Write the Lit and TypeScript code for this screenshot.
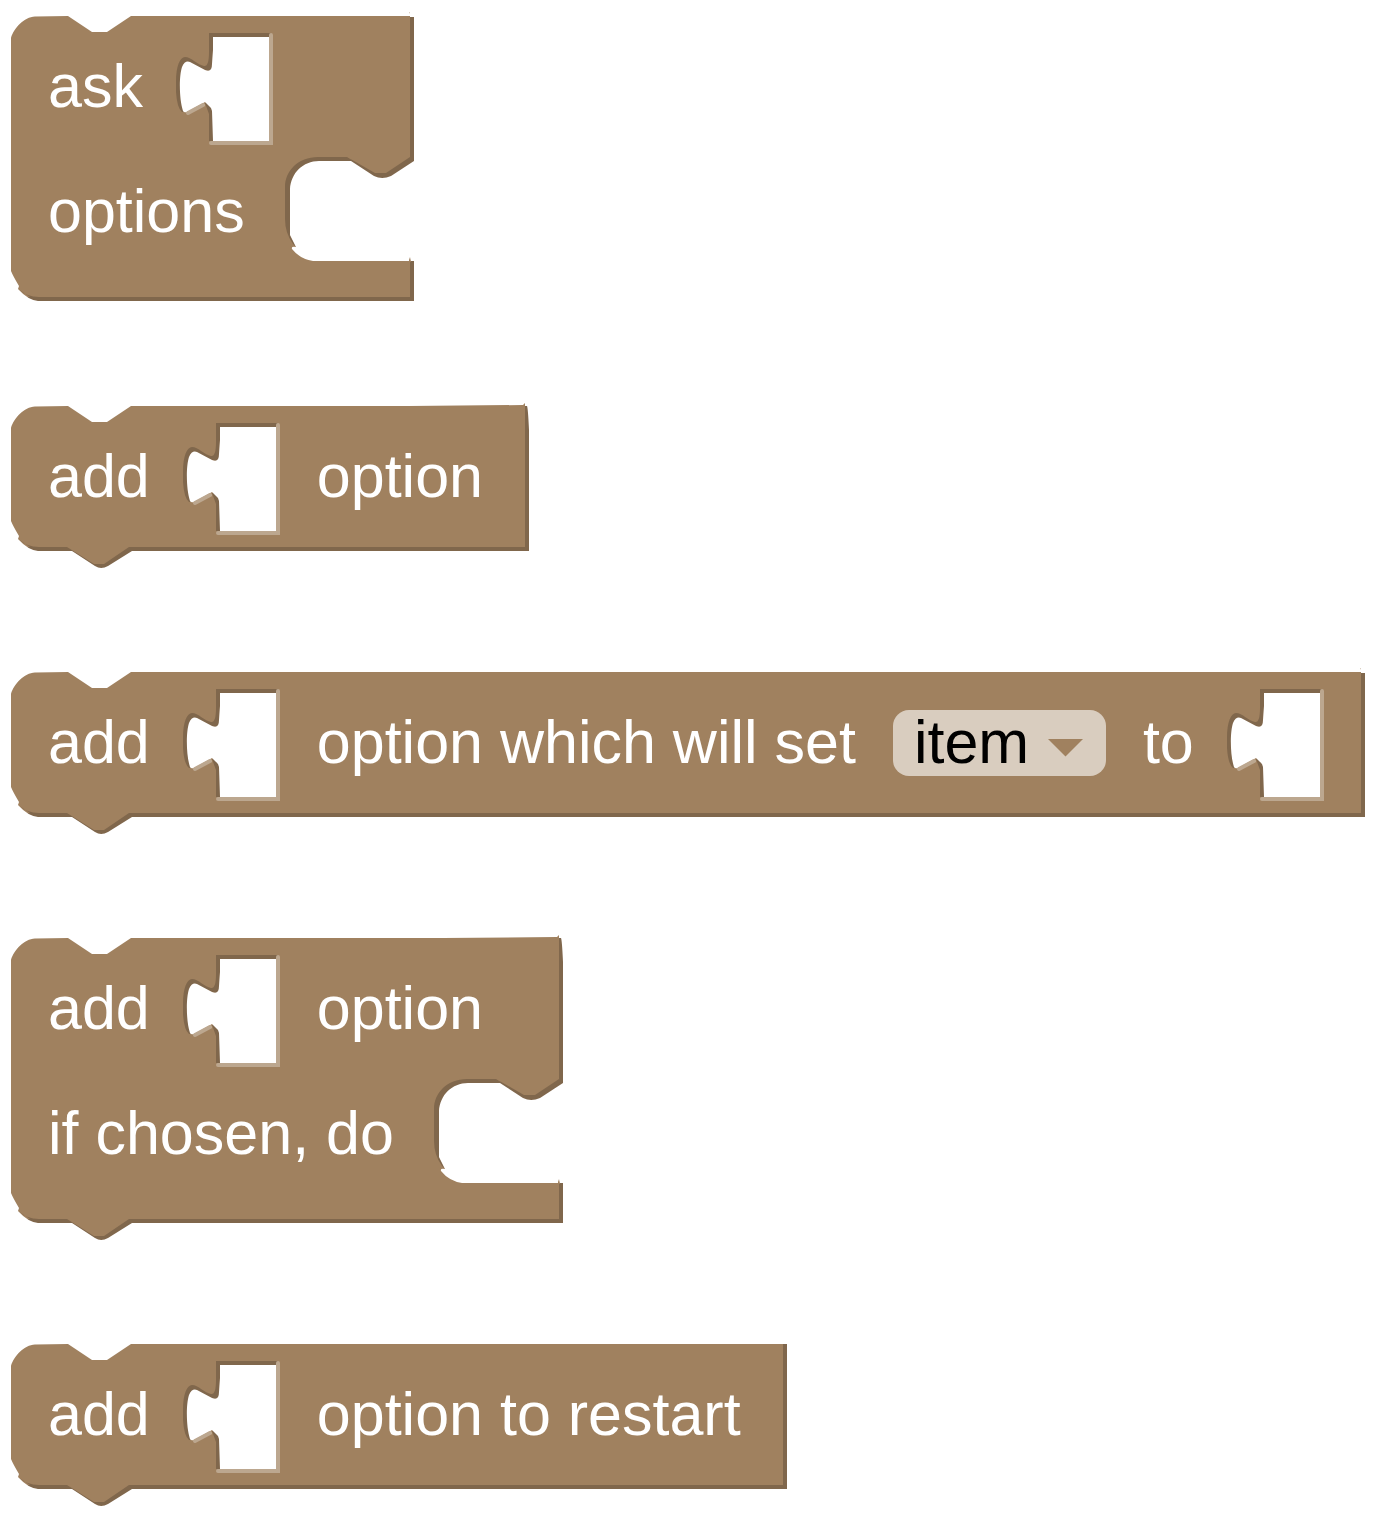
import { LitElement, html, css, svg, nothing } from "lit";
import { customElement, property } from "lit/decorators.js";

type Part =
  | { kind: "label"; text: string; for?: string }
  | { kind: "socket" }
  | { kind: "select"; id: string; options: string[] }
  | { kind: "mouth" };

interface BlockSpec {
  rows: Part[][];
  next: boolean;
  corner: "speck" | "spur" | "plain";
}

const label = (text: string, target?: string): Part => ({ kind: "label", text, for: target });
const socket: Part = { kind: "socket" };
const mouth: Part = { kind: "mouth" };

const BLOCKS: BlockSpec[] = [
  { rows: [[label("ask"), socket], [label("options"), mouth]], next: false, corner: "speck" },
  { rows: [[label("add"), socket, label("option")]], next: true, corner: "spur" },
  {
    rows: [
      [
        label("add"),
        socket,
        label("option which will set", "variable"),
        { kind: "select", id: "variable", options: ["item"] },
        label("to"),
        socket,
      ],
    ],
    next: true,
    corner: "speck",
  },
  {
    rows: [[label("add"), socket, label("option")], [label("if chosen, do"), mouth]],
    next: true,
    corner: "spur",
  },
  { rows: [[label("add"), socket, label("option to restart")]], next: true, corner: "plain" },
];

@customElement("puzzle-block")
export class PuzzleBlock extends LitElement {
  @property({ attribute: false }) spec!: BlockSpec;

  static styles = css`
    :host {
      display: block;
      width: fit-content;
    }
    .block {
      position: relative;
      background: #a0815f;
      box-shadow: inset -4px -4px 0 #80674c;
      color: #fff;
      font: 61px/61px "Liberation Sans", Arial, sans-serif;
      white-space: nowrap;
    }
    .linked {
      margin-bottom: 16px;
    }
    .stacked {
      padding-bottom: 40px;
    }
    .row {
      display: flex;
      align-items: center;
      gap: 37px;
      height: 145px;
      padding: 0 46px 0 37px;
      box-sizing: border-box;
    }
    .branch {
      height: 100px;
      padding-right: 0;
    }
    .text {
      padding-bottom: 4px;
    }
    .branch .text {
      padding-bottom: 0;
    }
    svg {
      display: block;
      overflow: visible;
      flex: none;
    }
    .cap {
      position: absolute;
      left: 0;
      pointer-events: none;
    }
    .top {
      top: 0;
    }
    .bottom {
      top: 100%;
    }
    .edge {
      left: 100%;
    }
    .socket {
      width: 97px;
      height: 113px;
      margin-left: -4px;
    }
    .socket:last-child {
      margin-right: -5px;
    }
    .mouth {
      width: 129px;
      height: 100px;
      margin-left: 3px;
    }
    .field {
      position: relative;
      margin-bottom: 4px;
    }
    .select {
      display: block;
      appearance: none;
      height: 66px;
      margin: 0;
      padding: 0 76px 0 21px;
      border: 0;
      border-radius: 16px;
      background: #d9cdbf;
      color: #000;
      font: inherit;
    }
    .arrow {
      position: absolute;
      right: 23px;
      top: 29px;
      pointer-events: none;
    }
    .body {
      fill: #a0815f;
    }
    .dark {
      fill: #80674c;
    }
    .hole {
      fill: #fff;
    }
    .light {
      fill: none;
      stroke: #bca78f;
      stroke-width: 4;
      stroke-linecap: round;
    }
  `;

  private renderSocket() {
    return html`<svg class="socket" viewBox="0 0 97 113" aria-hidden="true">
      <path class="dark" d="M33 1H95V6H37V18L36 37L33 39L29 38L12 30L8 36L5 56L8 80H6Q1 76 0 60V50C0 34 4 25 9 25C15 25 22 33 28 34Q33 35 33 20Z" />
      <path class="dark" d="M29 71L33 82V109H38V76L33 71Z" />
      <path class="hole" d="M37 5H93V109H37L36 79Q36 76 33 74L29 70L11 80Q8 81 7 79C3 67 3 44 6 35Q9 28 14 30L29 38Q36 41 36 32L37 18Z" />
      <path class="light" d="M95 3V111H35M12 81L27 73" />
    </svg>`;
  }

  private renderMouth() {
    return html`<svg class="mouth" viewBox="0 0 129 100" aria-hidden="true">
      <path class="dark" d="M33 -4H63L69 1H33L5 26V74L11 86L8 83Q0 72 0 58V26C0 10 13 -4 33 -4Z" />
      <path class="hole" d="M34 0H130V100H28Q15 98 7 88Q6 85 11 86L5 74V28C6 12 18 0 34 0Z" />
      <path class="dark" d="M66 0L89 15Q97 19 106 15L129 0V-4H66Z" />
      <path class="body" d="M62 -4L90 12H101L125 -4V-5H62Z" />
      <path class="body" d="M124 101V99L125 96L126 101Z" />
    </svg>`;
  }

  private renderPart(part: Part) {
    switch (part.kind) {
      case "label":
        return part.for
          ? html`<label class="text" for=${part.for}>${part.text}</label>`
          : html`<span class="text">${part.text}</span>`;
      case "select":
        return html`<div class="field">
          <select class="select" id=${part.id}>
            ${part.options.map((o) => html`<option>${o}</option>`)}
          </select>
          <svg class="arrow" width="35" height="18" viewBox="0 0 35 18" aria-hidden="true">
            <path class="body" d="M0 0H35L17.500 17.500Z" />
          </svg>
        </div>`;
      case "socket":
        return this.renderSocket();
      case "mouth":
        return this.renderMouth();
    }
  }

  private renderCorner() {
    const { corner } = this.spec;
    if (corner === "plain") return nothing;
    return html`<svg class="cap top edge" width="1" height="1" aria-hidden="true">
      ${corner === "spur"
        ? svg`<path class="body" d="M-120 0L-6 -1L-4 -3V0Z" />`
        : svg`<path class="body" opacity="0.5" d="M-5 -4H-4V-2Z" />`}
      ${corner === "spur"
        ? svg`<path class="hole" d="M-4 -1V0H-2Q-1 2 0 24H1V-1Z" />`
        : svg`<path class="hole" d="M-4 -1V1H0V2H1V-1Z" />`}
    </svg>`;
  }

  render() {
    const { rows, next } = this.spec;
    return html`<div class="block ${next ? "linked" : ""} ${rows.length > 1 ? "stacked" : ""}">
      ${rows.map(
        (row) => html`<div class="row ${row.some((p) => p.kind === "mouth") ? "branch" : ""}">
          ${row.map((part) => this.renderPart(part))}
        </div>`
      )}
      <svg class="cap top" width="1" height="1" aria-hidden="true">
        <path class="hole" d="M-1 24L0 22C3 12 13 1 24 0.500L57 0L81 16H96L120 0V-1H-1Z" />
      </svg>
      <svg class="cap bottom" width="1" height="1" aria-hidden="true">
        <path class="dark" d="M7 -12Q16 -4 28 -4V0H25Z" />
        <path class="hole" d="M-1 -32L0 -30Q2 -25 8 -15L7 -12Q17 -1 27 0V1H-1Z" />
        ${next
          ? svg`<path class="dark" d="M58 -2L61 0L84 15Q90 19 97 15L121 0V-4H58Z" />
              <path class="body" d="M56 -4L83 13H93L118 -4V-5H56Z" />`
          : nothing}
      </svg>
      ${this.renderCorner()}
    </div>`;
  }
}

@customElement("app-root")
export class AppRoot extends LitElement {
  static styles = css`
    :host {
      display: block;
      background: #fff;
    }
    .workspace {
      display: flex;
      flex-direction: column;
      align-items: flex-start;
      gap: 105px;
      padding: 16px 0 8px 11px;
    }
  `;

  render() {
    return html`<main class="workspace">
      ${BLOCKS.map((spec) => html`<puzzle-block .spec=${spec}></puzzle-block>`)}
    </main>`;
  }
}
